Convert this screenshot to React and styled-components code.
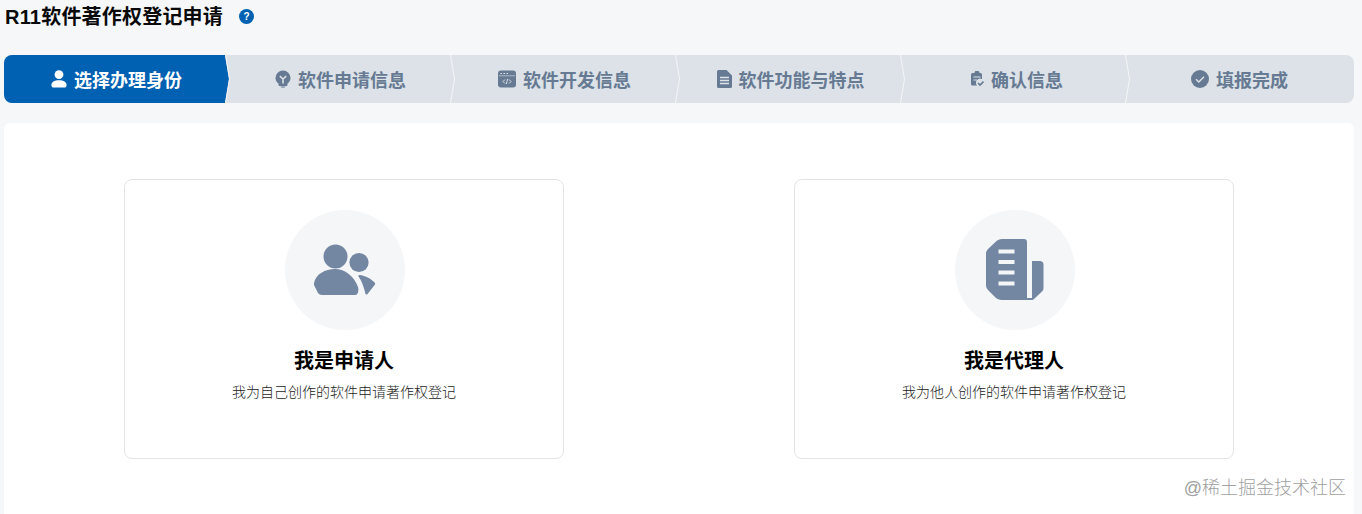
import React from "react";
import styled, { createGlobalStyle } from "styled-components";

const GlobalStyle = createGlobalStyle`
  html, body {
    margin: 0;
    padding: 0;
    height: 100%;
    overflow: hidden;
    background: #f5f7f9;
  }
  body {
    font-family: "Liberation Sans", "Noto Sans CJK SC", sans-serif;
  }
`;

const Page = styled.div`
  position: relative;
  width: 1362px;
  height: 514px;
  padding: 0 8px 0 4px;
  box-sizing: border-box;
  display: flex;
  flex-direction: column;
  overflow: hidden;
`;

const Header = styled.div`
  height: 32px;
  display: flex;
  align-items: center;
  margin-bottom: 23px;
  padding-left: 1px;
`;

const Title = styled.h1`
  margin: 0;
  padding-top: 2px;
  font-size: 20px;
  line-height: 30px;
  font-weight: 700;
  letter-spacing: 0.2px;
  color: #0a0a0a;
`;

const HelpBadge = styled.span`
  width: 15px;
  height: 15px;
  margin-left: 16px;
  border-radius: 50%;
  background: #0061b2;
  color: #fff;
  font-size: 10px;
  font-weight: 700;
  display: flex;
  align-items: center;
  justify-content: center;
`;

const Steps = styled.div`
  display: flex;
  height: 48px;
  background: #dce2e7;
  border-radius: 8px;
  margin-bottom: 20px;
`;

const Step = styled.div`
  position: relative;
  isolation: isolate;
  flex: 0 0 225px;
  box-sizing: border-box;
  display: flex;
  align-items: center;
  justify-content: center;
  gap: 7px;
  padding-right: ${(p) => p.$pr}px;
  font-size: 18px;
  font-weight: 700;
  color: ${(p) => (p.$active ? "#fff" : "#667a93")};

  &::before {
    content: ${(p) => (p.$active ? '""' : "none")};
    position: absolute;
    z-index: -1;
    inset: 0;
    background: #0061b2;
    border-radius: 8px 0 0 8px;
    clip-path: polygon(0 0, calc(100% - 4px) 0, 100% 50%, calc(100% - 4px) 100%, 0 100%);
  }

  &:not(:last-child)::after {
    content: "";
    position: absolute;
    z-index: 1;
    top: 0;
    right: -1px;
    width: 5px;
    height: 100%;
    background: #f4f6f8;
    clip-path: polygon(0 0, 1px 0, 100% 50%, 1px 100%, 0 100%, 4px 50%);
  }
`;

const Panel = styled.div`
  flex: 1;
  background: #fff;
  border-radius: 6px 6px 0 0;
  display: flex;
  justify-content: center;
  gap: 230px;
  padding-top: 56px;
`;

const Card = styled.div`
  width: 440px;
  height: 280px;
  box-sizing: border-box;
  background: #fff;
  border: 1px solid #e2e4e8;
  border-radius: 8px;
  padding-top: 30px;
  display: flex;
  flex-direction: column;
  align-items: center;
`;

const IconCircle = styled.div`
  width: 120px;
  height: 120px;
  margin-left: 2px;
  border-radius: 50%;
  background: #f4f6f8;
  display: flex;
  align-items: center;
  justify-content: center;
`;

const CardTitle = styled.div`
  margin-top: 16px;
  height: 30px;
  line-height: 30px;
  font-size: 20px;
  font-weight: 700;
  color: #000;
`;

const CardText = styled.div`
  margin-top: 6px;
  font-size: 14px;
  line-height: 20px;
  font-weight: 300;
  color: #222;
`;

const Watermark = styled.div`
  position: absolute;
  right: 16px;
  top: 475px;
  font-size: 18px;
  line-height: 26px;
  font-weight: 300;
  color: #a0a0a0;
`;

const UserIcon = () => (
  <svg width="16" height="18" viewBox="0 0 16 18" fill="currentColor">
    <circle cx="8" cy="4.6" r="4.4" />
    <path d="M0.4 15.2C0.4 12 3.4 10.2 8 10.2s7.6 1.8 7.6 5c0 1.6-1 2.4-2.4 2.4H2.8c-1.4 0-2.4-.8-2.4-2.4z" />
  </svg>
);

const BulbIcon = () => (
  <svg width="16" height="18" viewBox="0 0 16 18" fill="currentColor">
    <path d="M8 .5A7.5 7.5 0 0 0 .5 8c0 2.6 1.3 4.4 3 5.6V15a1 1 0 0 0 1 1h7a1 1 0 0 0 1-1v-1.4c1.7-1.2 3-3 3-5.600A7.5 7.5 0 0 0 8 .5z" />
    <path d="M5.5 16.600h5c-.4.8-1.3 1.2-2.5 1.2s-2.1-.4-2.5-1.2z" />
    <path d="M4.800 6.200L8 9l3.200-2.800M8 9v4.500" fill="none" stroke="#dce2e7" strokeWidth="1.600" />
  </svg>
);

const CodeWindowIcon = () => (
  <svg width="18" height="18" viewBox="0 0 18 18" fill="currentColor">
    <rect x="0" y="0.5" width="18" height="17" rx="3" />
    <path d="M2.500 3.500h1.500M5.500 3.500h1.500M8.500 3.500h1.500" stroke="#dce2e7" strokeWidth="1" />
    <path d="M0.800 5.800h16.400" stroke="#dce2e7" strokeWidth="0.600" />
    <path d="M7 9.500L5 11.500l2 2M11 9.500l2 2-2 2M9.700 9l-1.400 5" fill="none" stroke="#dce2e7" strokeWidth="1" />
  </svg>
);

const DocIcon = () => (
  <svg width="15" height="18" viewBox="0 0 15 18" fill="currentColor">
    <path d="M1.500 0H9.500L15 5.500V16.500A1.500 1.500 0 0 1 13.500 18H1.500A1.500 1.500 0 0 1 0 16.500V1.500A1.500 1.500 0 0 1 1.500 0z" />
    <path d="M3 7.500h9M3 10.500h9M3 13.500h9" stroke="#dce2e7" strokeWidth="1.300" />
  </svg>
);

const ConfirmIcon = () => (
  <svg width="14" height="16" viewBox="0 0 14 16" fill="currentColor">
    <path d="M4.500 2V1.500C4.500.7 5.200 0 6 0h2c.8 0 1.500.7 1.500 1.500V2h1A1.500 1.500 0 0 1 12 3.500V8a4.200 4.200 0 0 0-5 6.500H2.500A1.500 1.500 0 0 1 1 13V3.500A1.500 1.500 0 0 1 2.500 2z" />
    <path d="M3.500 6h7M3.500 9h3.500" stroke="#dce2e7" strokeWidth="1.200" />
    <path d="M8 12l2 2 3.500-3.500" fill="none" stroke="currentColor" strokeWidth="1.600" />
  </svg>
);

const CheckCircleIcon = () => (
  <svg width="18" height="18" viewBox="0 0 18 18" fill="currentColor">
    <circle cx="9" cy="9" r="9" />
    <path d="M5 9.200l2.800 2.800L13 6.800" fill="none" stroke="#dce2e7" strokeWidth="1.500" />
  </svg>
);

const PeopleIcon = () => (
  <svg width="62" height="52" viewBox="1 0 62 52" fill="#7387a2">
    <circle cx="22.500" cy="12.500" r="12" />
    <circle cx="46" cy="18.500" r="9.600" />
    <path d="M1 39C3 30 12 25 22 25C32 25 41 32 45 43C46 47 45 51 42 51H9C7 51 6 50 5 49L1.500 42C.8 41 .8 40 1 39z" />
    <path d="M46.500 31c6 .5 12 4 15.500 8 .3.5.3 1 0 1.500L54.500 50c-.6.8-1.500.8-2 0C51 44 49 37 45.500 32.500c-.4-.6 0-1.500 1-1.500z" />
  </svg>
);

const BuildingIcon = () => (
  <svg width="58" height="62" viewBox="0 0 58 62" fill="#7387a2">
    <path d="M16 0H38c2 0 3 1.200 3 3V61H16C13 61 11 60 9.500 58.500L2 51C.7 49.500 0 48 0 46V15C0 13 .7 11.500 2 10L10 2.500C11.500 1 13.500 0 16 0z" />
    <path d="M46 22H54c2 0 3.500 1.400 3.500 3.500V49c0 1.500-.5 2.500-1.500 3.500L48 60c-1 1-1.600 1-3 1H41V59H46z" />
    <path d="M12.500 12.500H28.500M12.500 23H28.500M12.500 33.500H28.500M12.500 44.500H28.500" stroke="#f4f6f8" strokeWidth="4" />
  </svg>
);

const steps = [
  { label: "选择办理身份", icon: <UserIcon />, pr: 0 },
  { label: "软件申请信息", icon: <BulbIcon />, pr: 2 },
  { label: "软件开发信息", icon: <CodeWindowIcon />, pr: 4 },
  { label: "软件功能与特点", icon: <DocIcon />, pr: 2 },
  { label: "确认信息", icon: <ConfirmIcon />, pr: 0 },
  { label: "填报完成", icon: <CheckCircleIcon />, pr: 4 },
];

const cards = [
  { title: "我是申请人", text: "我为自己创作的软件申请著作权登记", icon: <PeopleIcon /> },
  { title: "我是代理人", text: "我为他人创作的软件申请著作权登记", icon: <BuildingIcon /> },
];

export default function App() {
  return (
    <Page>
      <GlobalStyle />
      <Header>
        <Title>R11软件著作权登记申请</Title>
        <HelpBadge>?</HelpBadge>
      </Header>
      <Steps>
        {steps.map((step, i) => (
          <Step key={step.label} $active={i === 0} $pr={step.pr}>
            {step.icon}
            {step.label}
          </Step>
        ))}
      </Steps>
      <Panel>
        {cards.map((card) => (
          <Card key={card.title}>
            <IconCircle>{card.icon}</IconCircle>
            <CardTitle>{card.title}</CardTitle>
            <CardText>{card.text}</CardText>
          </Card>
        ))}
      </Panel>
      <Watermark>@稀土掘金技术社区</Watermark>
    </Page>
  );
}
